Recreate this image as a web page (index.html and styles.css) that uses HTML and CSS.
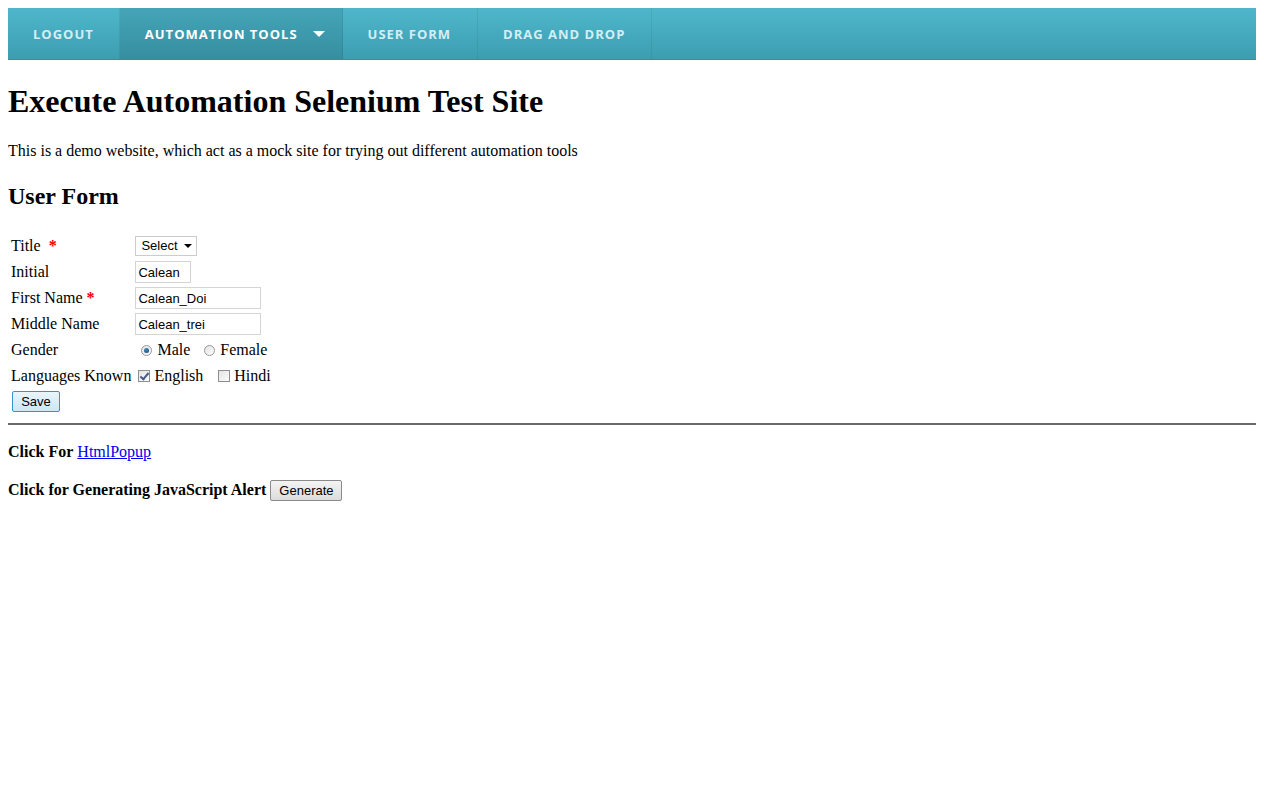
FILE: index.html
```html
<!DOCTYPE html>
<html>
<head>
<meta charset="utf-8">
<title>Execute Automation</title>
<link rel="stylesheet" href="styles.css">
</head>
<body>
<nav class="nav">
  <a class="nav-item" href="#">LOGOUT</a>
  <a class="nav-item active" href="#">AUTOMATION TOOLS <span class="caret"></span></a>
  <a class="nav-item" href="#">USER FORM</a>
  <a class="nav-item" href="#">DRAG AND DROP</a>
</nav>
<h1>Execute Automation Selenium Test Site</h1>
<p class="intro">This is a demo website, which act as a mock site for trying out different automation tools</p>
<h2>User Form</h2>
<form>
<table class="form">
  <tr><td>Title &nbsp;<span class="req">*</span></td><td><span class="sel">Select</span></td></tr>
  <tr><td>Initial</td><td><input class="txt w-s" type="text" value="Calean"></td></tr>
  <tr><td>First Name <span class="req">*</span></td><td><input class="txt w-l" type="text" value="Calean_Doi"></td></tr>
  <tr><td>Middle Name</td><td><input class="txt w-l" type="text" value="Calean_trei"></td></tr>
  <tr><td>Gender</td><td class="opts"><input class="rd" type="radio" name="g" checked>Male &nbsp;<input class="rd" type="radio" name="g">Female</td></tr>
  <tr><td>Languages Known</td><td class="opts"><input class="cb" type="checkbox" checked>English &nbsp;&nbsp;<input class="cb" type="checkbox">Hindi</td></tr>
  <tr class="last"><td colspan="2"><button type="button" class="btn save">Save</button></td></tr>
</table>
</form>
<hr>
<p class="popup"><b>Click For</b> <a href="#">HtmlPopup </a></p>
<p class="alert"><b>Click for Generating JavaScript Alert</b> <button type="button" class="btn gen">Generate</button></p>
</body>
</html>
```
FILE: styles.css
```css
body {
  margin: 8px;
  font-family: "Liberation Serif", "Times New Roman", serif;
  font-size: 16px;
  color: #000;
  background: #fff;
}
.nav {
  display: flex;
  height: 52px;
  background: linear-gradient(#4fb7cb, #3c9db0);
  box-shadow: inset 0 -1px 0 rgba(0,0,0,0.08);
}
.nav-item {
  display: flex;
  align-items: center;
  padding: 0 26px 0 25px;
  font-family: "Open Sans", sans-serif;
  font-weight: 700;
  font-size: 13px;
  letter-spacing: 1px;
  color: #d4eef3;
  text-decoration: none;
  border-right: 1px solid rgba(0,0,0,0.06);
}
.nav-item:first-child { padding-right: 25px; }
.nav-item.active {
  color: #fff;
  padding-right: 17px;
  background: linear-gradient(#45a5b8, #358e9f);
}
.caret {
  display: inline-block;
  margin-left: 15px;
  width: 0; height: 0;
  border-left: 6px solid transparent;
  border-right: 6px solid transparent;
  border-top: 6px solid #fff;
}
h1 { font-size: 32px; margin: 23px 0 22px; }
.intro { margin: 18px 0; }
h2 { font-size: 24px; margin: 23px 0 22px; }
.form { border-spacing: 2px; }
.form tr { height: 24px; }
.form tr.last { height: 23px; }
.form td { padding: 1px; vertical-align: middle; }
.req { color: #e00; font-weight: bold; }
.sel {
  position: relative;
  display: inline-block;
  box-sizing: border-box;
  width: 62px;
  height: 20px;
  line-height: 18px;
  padding: 0 0 0 5px;
  border: 1px solid #ccc;
  font-family: "Liberation Sans", Arial, sans-serif;
  font-size: 13px;
}
.sel::after {
  content: "";
  position: absolute;
  right: 4px; top: 7px;
  border-left: 4px solid transparent;
  border-right: 4px solid transparent;
  border-top: 4px solid #000;
}
.txt {
  box-sizing: border-box;
  height: 22px;
  margin: 0;
  padding: 1px 2px;
  border: 1px solid #d4d4d4;
  font-family: "Liberation Sans", Arial, sans-serif;
  font-size: 13px;
}
.w-s { width: 56px; }
.w-l { width: 126px; }
.rd, .cb {
  -webkit-appearance: none;
  appearance: none;
  box-sizing: border-box;
  display: inline-block;
  vertical-align: -1px;
  width: 12px; height: 12px;
  margin: 0 3px 0 5px;
  border: 1px solid #999;
  background: linear-gradient(135deg, #e4e4e4, #fbfbfb);
  position: relative;
}
.rd { border-radius: 50%; width: 11px; height: 11px; margin: 0 5px 0 6px; }
.rd:checked::after {
  content: "";
  position: absolute;
  left: 2px; top: 2px;
  width: 5px; height: 5px;
  border-radius: 50%;
  background: radial-gradient(circle at 40% 35%, #3f8fc4, #143f66);
}
.cb { margin-left: 3px; margin-right: 4px; border-color: #8e8f8f; }
.cb:checked::after {
  content: "";
  position: absolute;
  left: 3px; top: 0px;
  width: 3px; height: 7px;
  border: solid #4a5a8a;
  border-width: 0 2px 2px 0;
  transform: rotate(40deg);
}
.btn {
  font-family: "Liberation Sans", Arial, sans-serif;
  font-size: 13px;
  height: 21px;
  padding: 0 8px;
  border: 1px solid #8a8a8a;
  border-radius: 2px;
  background: linear-gradient(#f4f4f4, #dcdcdc);
  color: #000;
}
.save { margin: 0 0 0 1px; width: 48px; border-color: #3c8fc9; background: linear-gradient(#eaf5fc, #cde6f6); }
.gen { width: 72px; }
hr { margin: 8px 0; border: 0; border-top: 2px solid #6a6a6a; }
.popup { margin: 18px 0; }
.alert { margin: 19px 0; }
a { color: #00e; }
```
